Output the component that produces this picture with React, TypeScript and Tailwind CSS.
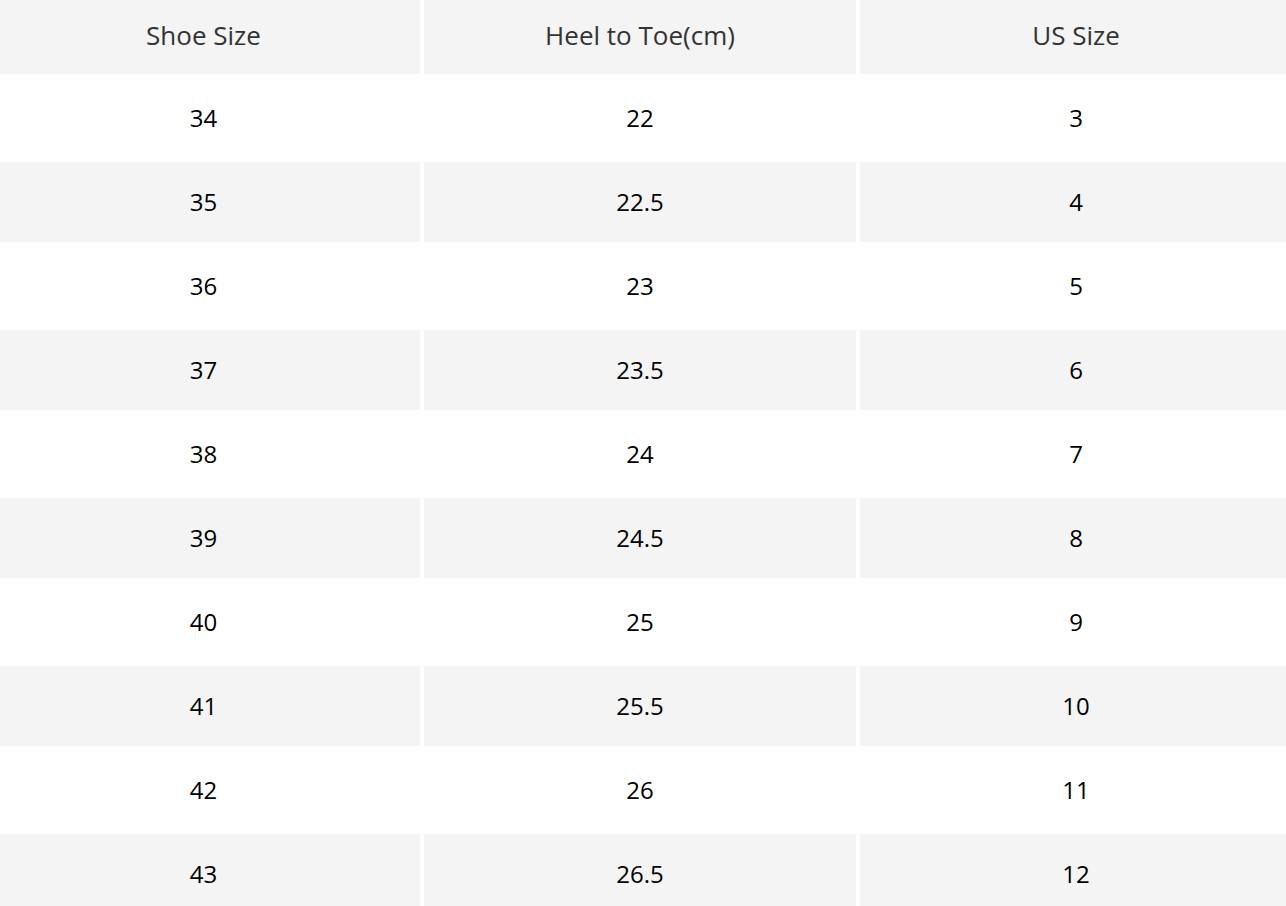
import React from "react";

const rows: [string, string, string][] = [
  ["34", "22", "3"],
  ["35", "22.5", "4"],
  ["36", "23", "5"],
  ["37", "23.5", "6"],
  ["38", "24", "7"],
  ["39", "24.5", "8"],
  ["40", "25", "9"],
  ["41", "25.5", "10"],
  ["42", "26", "11"],
  ["43", "26.5", "12"],
];

export default function App() {
  return (
    <div className="w-[1286px] h-[906px] overflow-hidden bg-white" style={{ fontFamily: '"Open Sans", "Noto Sans", sans-serif' }}>
      <div className="-ml-[13px] -mt-[4px] grid grid-cols-[433px_432px_432px] gap-[4px]">
        {["Shoe Size", "Heel to Toe(cm)", "US Size"].map((h) => (
          <div key={h} className="h-[78px] bg-[#f4f4f4] flex items-center justify-center text-[26px] text-[#333333]">
            {h}
          </div>
        ))}
        {rows.map((r, i) =>
          r.map((c, j) => (
            <div
              key={`${i}-${j}`}
              className={`h-[80px] flex items-center justify-center text-[24px] text-black ${i % 2 === 1 ? "bg-[#f4f4f4]" : "bg-white"}`}
            >
              {c}
            </div>
          ))
        )}
      </div>
    </div>
  );
}
